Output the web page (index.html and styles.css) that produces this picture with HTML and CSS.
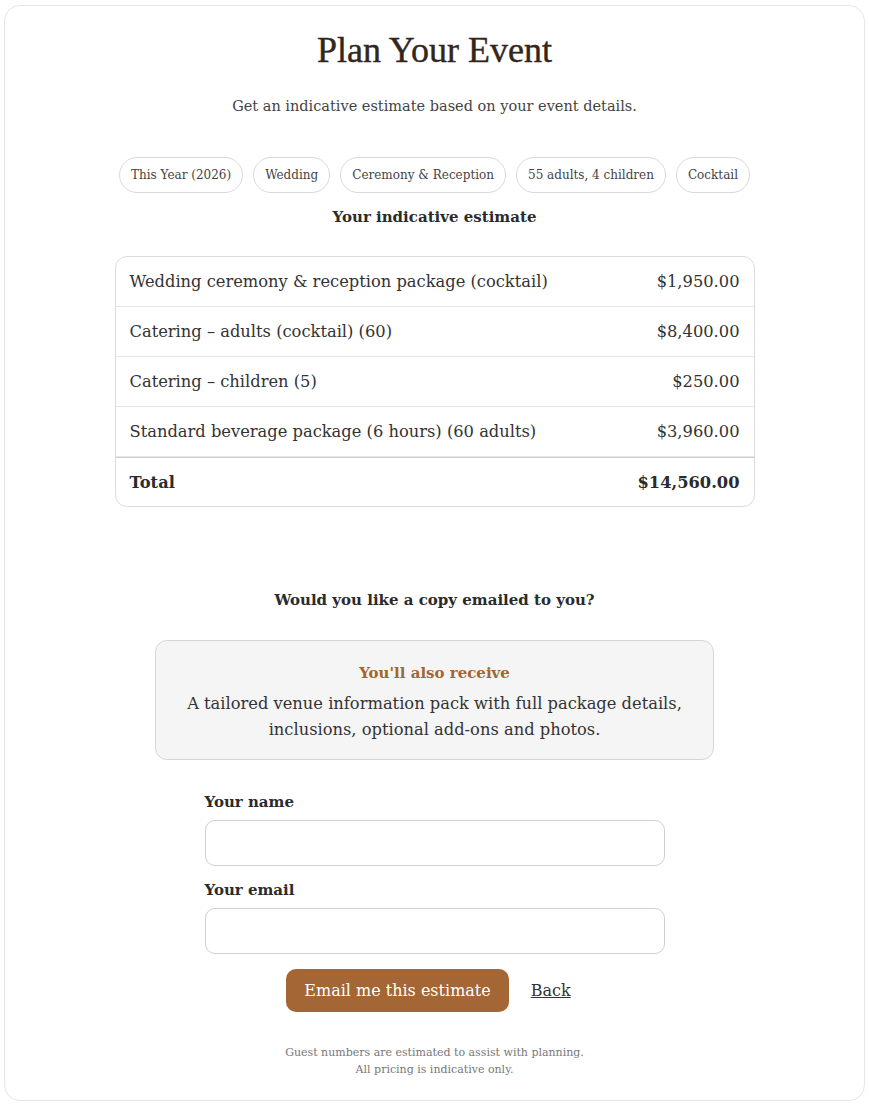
FILE: index.html
```html
<!DOCTYPE html>
<html>
  <head>
    <title>Plan Your Event</title>
    <link rel="stylesheet" href="styles.css">
  </head>
  <body>
    <div class="card">
      <h1 class="title">Plan Your Event</h1>
      <p class="subtitle">Get an indicative estimate based on your event details.</p>

      <div class="chips">
        <span class="chip">This Year (2026)</span>
        <span class="chip">Wedding</span>
        <span class="chip">Ceremony &amp; Reception</span>
        <span class="chip">55 adults, 4 children</span>
        <span class="chip">Cocktail</span>
      </div>

      <h3 class="section-title">Your indicative estimate</h3>

      <table class="estimate">
        <tr>
          <td>Wedding ceremony &amp; reception package (cocktail)</td>
          <td class="price">$1,950.00</td>
        </tr>
        <tr>
          <td>Catering – adults (cocktail) (60)</td>
          <td class="price">$8,400.00</td>
        </tr>
        <tr>
          <td>Catering – children (5)</td>
          <td class="price">$250.00</td>
        </tr>
        <tr>
          <td>Standard beverage package (6 hours) (60 adults)</td>
          <td class="price">$3,960.00</td>
        </tr>
        <tr class="total">
          <td>Total</td>
          <td class="price">$14,560.00</td>
        </tr>
      </table>

      <h3 class="section-title email-title">Would you like a copy emailed to you?</h3>

      <div class="bonus-box">
        <div class="bonus-title">You'll also receive</div>
        <p>A tailored venue information pack with full package details, inclusions, optional add-ons and photos.</p>
      </div>

      <form class="email-form">
        <label for="name">Your name</label>
        <input id="name" type="text">
        <label for="email">Your email</label>
        <input id="email" type="email">
        <div class="actions">
          <button type="button" class="btn">Email me this estimate</button>
          <a href="#" class="back">Back</a>
        </div>
      </form>

      <p class="footnote">
        Guest numbers are estimated to assist with planning.<br>
        All pricing is indicative only.
      </p>
    </div>
  </body>
</html>
```

FILE: styles.css
```css
body {
  margin: 5px 4px;
  background: #fff;
  color: #333;
  font-family: "DejaVu Serif", serif;
}

.card {
  border: 1px solid #e6e6e6;
  border-radius: 16px;
  padding: 20px 20px 22px;
}

.title {
  margin: 0;
  font-family: "Liberation Serif", serif;
  font-weight: normal;
  font-size: 36px;
  line-height: 48px;
  color: #33261b;
  -webkit-text-stroke: 0.4px #33261b;
  text-align: center;
}

.subtitle {
  margin: 20px 0 0;
  font-size: 14.5px;
  line-height: 24px;
  color: #444;
  text-align: center;
}

.chips {
  display: flex;
  justify-content: center;
  gap: 10px;
  margin-top: 39px;
}

.chip {
  border: 1px solid #d9d9d9;
  border-radius: 18px;
  height: 34px;
  line-height: 34px;
  padding: 0 11px;
  font-size: 12px;
  color: #444;
}

.section-title {
  margin: 12px 0 0;
  font-size: 15px;
  line-height: 24px;
  font-weight: bold;
  color: #2b2b2b;
  text-align: center;
}

.estimate {
  width: 640px;
  margin: 27px auto 0;
  border-collapse: separate;
  border-spacing: 0;
  border: 1px solid #dcdcdc;
  border-radius: 12px;
  font-size: 16.3px;
  color: #333;
}

.estimate td {
  height: 49px;
  padding: 0 14px;
  border-bottom: 1px solid #e6e6e6;
}

.estimate .price {
  text-align: right;
}

.estimate .total td {
  height: 48px;
  border-top: 1px solid #d0d0d0;
  border-bottom: none;
  font-weight: bold;
  color: #2b2b2b;
}

.email-title {
  margin-top: 81px;
  font-size: 15px;
}

.bonus-box {
  width: 559px;
  box-sizing: border-box;
  margin: 28px auto 0;
  padding: 20px 20px 16px;
  background: #f5f5f5;
  border: 1px solid #d6d6d6;
  border-radius: 12px;
  text-align: center;
}

.bonus-title {
  font-size: 15px;
  line-height: 24px;
  font-weight: bold;
  color: #a5652f;
}

.bonus-box p {
  margin: 6px 0 0;
  font-size: 16.3px;
  line-height: 26px;
  color: #333;
}

.email-form {
  width: 460px;
  margin: 30px auto 0;
}

.email-form label {
  display: block;
  font-size: 15px;
  line-height: 24px;
  font-weight: bold;
  color: #2b2b2b;
}

.email-form input {
  display: block;
  width: 100%;
  height: 46px;
  box-sizing: border-box;
  margin: 6px 0 12px;
  border: 1px solid #cfcfcf;
  border-radius: 10px;
  font-family: inherit;
  font-size: 16px;
}

.actions {
  display: flex;
  justify-content: center;
  align-items: center;
  gap: 22px;
  margin-top: 15px;
  padding-right: 12px;
}

.btn {
  height: 43px;
  padding: 0 18px;
  border: none;
  border-radius: 10px;
  background: #a36634;
  color: #fff;
  font-family: inherit;
  font-size: 16px;
}

.back {
  color: #333;
  font-size: 16px;
}

.footnote {
  margin: 32px 0 0;
  font-size: 11px;
  line-height: 17px;
  color: #777;
  text-align: center;
}
```
